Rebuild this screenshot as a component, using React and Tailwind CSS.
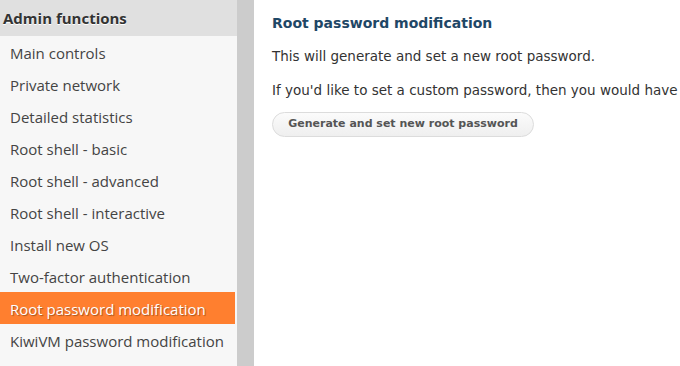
export default function App() {
  const items = [
    "Main controls",
    "Private network",
    "Detailed statistics",
    "Root shell - basic",
    "Root shell - advanced",
    "Root shell - interactive",
    "Install new OS",
    "Two-factor authentication",
    "Root password modification",
    "KiwiVM password modification",
  ];
  const active = "Root password modification";

  return (
    <div className="flex h-[366px] w-[680px] overflow-hidden bg-white">
      {/* sidebar */}
      <div className="flex w-[237px] shrink-0 flex-col bg-[#f7f7f7] font-['Open_Sans',sans-serif]">
        <div className="flex h-[36px] items-center bg-[#e0e0e0] pl-[3px] text-[15px] font-bold text-[#333] [text-shadow:0_1px_0_#fff]">
          Admin functions
        </div>
        <div className="mr-[2px] flex flex-col">
          {items.map((item) => (
            <div
              key={item}
              className={`flex h-[32px] items-center pl-[10px] pt-[2px] text-[15px] ${
                item === active
                  ? "bg-[#ff7f2f] text-white [text-shadow:1px_1px_1px_rgba(0,0,0,0.35)]"
                  : "text-[#444]"
              }`}
            >
              {item}
            </div>
          ))}
        </div>
      </div>
      <div className="w-[17px] shrink-0 bg-[#cccccc]" />

      {/* content */}
      <div className="min-w-0 flex-1 overflow-hidden whitespace-nowrap pl-[18px] pt-[13px] font-['DejaVu_Sans',Verdana,sans-serif]">
        <h2 className="text-[14px] font-bold leading-[20px] text-[#1f4766]">
          Root password modification
        </h2>
        <p className="mt-[14px] text-[13.5px] leading-[18px] text-[#333]">
          This will generate and set a new root password.
        </p>
        <p className="mt-[16px] text-[13.5px] leading-[18px] text-[#333]">
          If you'd like to set a custom password, then you would have to do it manually via SSH.
        </p>
        <button className="mt-[13px] h-[25px] w-[262px] rounded-full border border-[#dcdcdc] bg-gradient-to-b from-[#fbfbfb] to-[#efefef] text-[11px] font-bold text-[#555]">
          Generate and set new root password
        </button>
      </div>
    </div>
  );
}
